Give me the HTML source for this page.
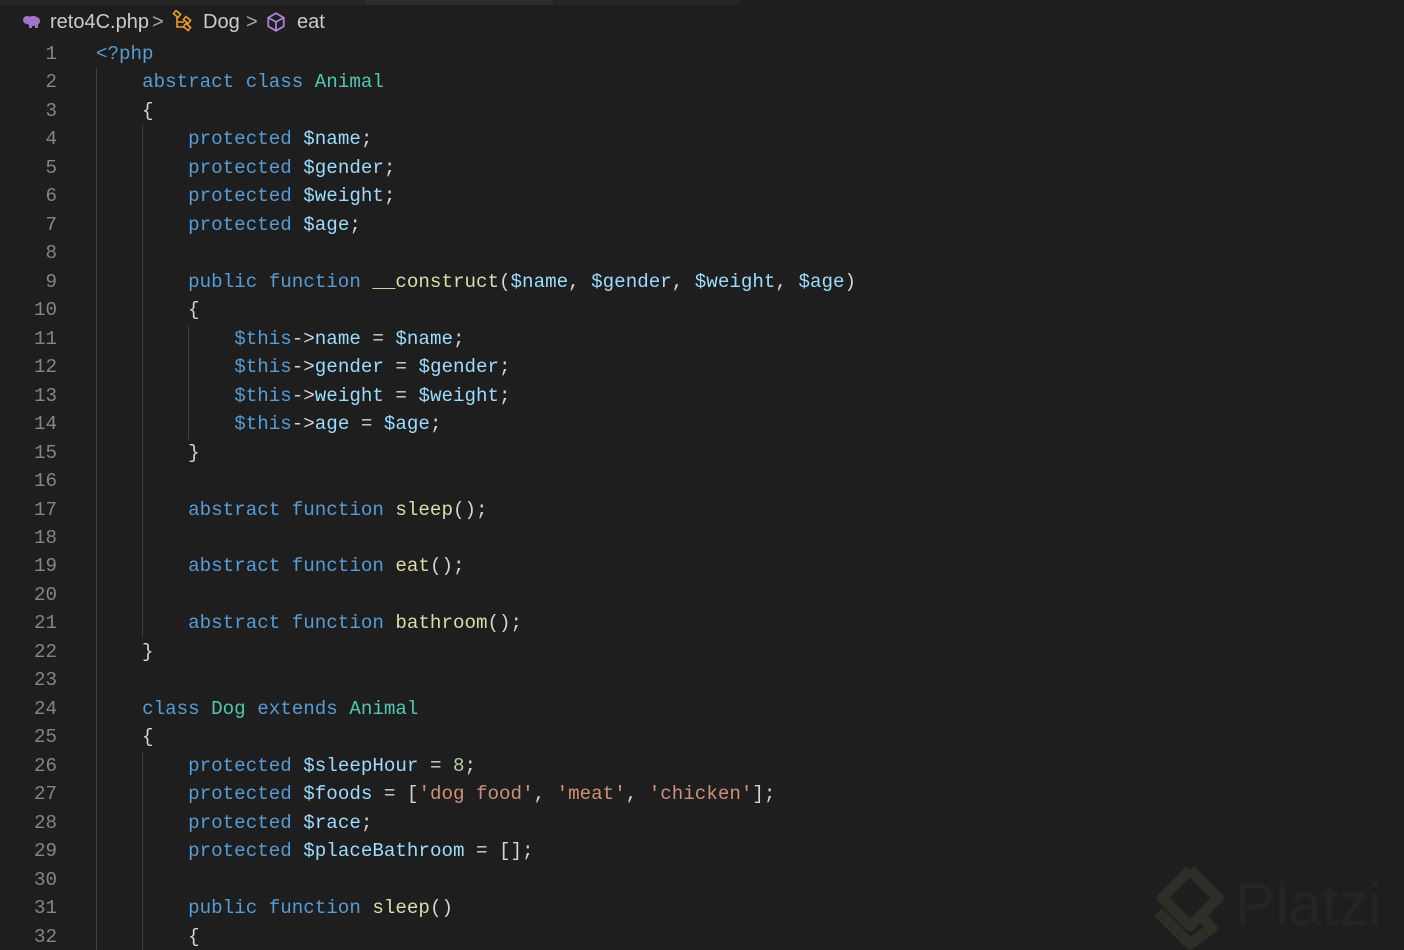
<!DOCTYPE html>
<html><head><meta charset="utf-8"><style>
html,body{margin:0;padding:0;background:#1e1e1e;width:1404px;height:950px;overflow:hidden;position:relative}
.top{position:absolute;left:0;top:0;width:1404px;height:5px;background:#252526}
.tab{position:absolute;top:0;height:5px;background:#2d2d2d}
.bc{position:absolute;top:10px;font-family:"Liberation Sans",sans-serif;font-size:20px;color:#cccccc;white-space:nowrap;line-height:24px}
.code{position:absolute;top:40px;left:0;font-family:"Liberation Mono",monospace;font-size:19.2px;}
.l{height:28.48px;line-height:28.48px;white-space:pre;position:relative}
.n{position:absolute;left:0;width:57px;text-align:right;color:#858585}
.t{position:absolute;left:96px;color:#d4d4d4}
.k{color:#569cd6}.v{color:#9cdcfe}.f{color:#dcdcaa}.c{color:#4ec9b0}.s{color:#ce9178}.d{color:#b5cea8}
.g{position:absolute;width:1px;background:#404040}
</style></head><body>
<div class="top"></div><div class="tab" style="left:365px;width:188px"></div><div class="tab" style="left:740px;width:664px;background:#1e1e1e"></div>
<svg style="position:absolute;left:22px;top:14px" width="20" height="16" viewBox="0 0 20 16"><ellipse cx="11" cy="7" rx="7" ry="5" fill="#a074c4"/><circle cx="5" cy="6" r="4" fill="#a074c4"/><rect x="7" y="9" width="3" height="5" fill="#a074c4"/><rect x="13" y="9" width="3" height="5" fill="#a074c4"/></svg>
<div class="bc" style="left:50px">reto4C.php</div>
<div class="bc" style="left:152px;color:#aaa">&gt;</div>
<svg style="position:absolute;left:171px;top:10px" width="22" height="22" viewBox="0 0 22 22" fill="none" stroke="#ee9d28" stroke-width="1.6"><rect x="3" y="2" width="6" height="4" transform="rotate(40 6 4)"/><rect x="13" y="8" width="6" height="4" transform="rotate(40 16 10)"/><rect x="13" y="15" width="6" height="4" transform="rotate(40 16 17)"/><path d="M6 7v10h7M6 12h7"/></svg>
<div class="bc" style="left:203px">Dog</div>
<div class="bc" style="left:246px;color:#aaa">&gt;</div>
<svg style="position:absolute;left:265px;top:11px" width="22" height="22" viewBox="0 0 20 20" fill="none" stroke="#b180d7" stroke-width="1.6"><path d="M10 2l7 4v8l-7 4-7-4V6z M3 6l7 4 7-4 M10 10v8"/></svg>
<div class="bc" style="left:297px">eat</div>
<div class="g" style="left:96px;top:68px;height:884px"></div>
<div class="g" style="left:142px;top:125px;height:512px"></div>
<div class="g" style="left:142px;top:752px;height:200px"></div>
<div class="g" style="left:188px;top:325px;height:114px"></div>
<svg style="position:absolute;left:1150px;top:860px" width="250" height="90" viewBox="0 0 250 90"><path d="M40 10 L68 38 L50 56 M40 10 L12 38 L40 66 L50 56 L62 68 L40 84 L8 52" fill="none" stroke="#2c2f26" stroke-width="11" stroke-linejoin="round"/><text x="85" y="65" font-family="Liberation Sans,sans-serif" font-size="60" fill="#242424">Platzi</text></svg>
<div class="code">
<div class="l"><span class="n">1</span><span class="t"><span class="k">&lt;?php</span></span></div>
<div class="l"><span class="n">2</span><span class="t">    <span class="k">abstract class</span> <span class="c">Animal</span></span></div>
<div class="l"><span class="n">3</span><span class="t">    {</span></div>
<div class="l"><span class="n">4</span><span class="t">        <span class="k">protected</span> <span class="v">$name</span>;</span></div>
<div class="l"><span class="n">5</span><span class="t">        <span class="k">protected</span> <span class="v">$gender</span>;</span></div>
<div class="l"><span class="n">6</span><span class="t">        <span class="k">protected</span> <span class="v">$weight</span>;</span></div>
<div class="l"><span class="n">7</span><span class="t">        <span class="k">protected</span> <span class="v">$age</span>;</span></div>
<div class="l"><span class="n">8</span><span class="t"></span></div>
<div class="l"><span class="n">9</span><span class="t">        <span class="k">public function</span> <span class="f">__construct</span>(<span class="v">$name</span>, <span class="v">$gender</span>, <span class="v">$weight</span>, <span class="v">$age</span>)</span></div>
<div class="l"><span class="n">10</span><span class="t">        {</span></div>
<div class="l"><span class="n">11</span><span class="t">            <span class="k">$this</span>-&gt;<span class="v">name</span> = <span class="v">$name</span>;</span></div>
<div class="l"><span class="n">12</span><span class="t">            <span class="k">$this</span>-&gt;<span class="v">gender</span> = <span class="v">$gender</span>;</span></div>
<div class="l"><span class="n">13</span><span class="t">            <span class="k">$this</span>-&gt;<span class="v">weight</span> = <span class="v">$weight</span>;</span></div>
<div class="l"><span class="n">14</span><span class="t">            <span class="k">$this</span>-&gt;<span class="v">age</span> = <span class="v">$age</span>;</span></div>
<div class="l"><span class="n">15</span><span class="t">        }</span></div>
<div class="l"><span class="n">16</span><span class="t"></span></div>
<div class="l"><span class="n">17</span><span class="t">        <span class="k">abstract function</span> <span class="f">sleep</span>();</span></div>
<div class="l"><span class="n">18</span><span class="t"></span></div>
<div class="l"><span class="n">19</span><span class="t">        <span class="k">abstract function</span> <span class="f">eat</span>();</span></div>
<div class="l"><span class="n">20</span><span class="t"></span></div>
<div class="l"><span class="n">21</span><span class="t">        <span class="k">abstract function</span> <span class="f">bathroom</span>();</span></div>
<div class="l"><span class="n">22</span><span class="t">    }</span></div>
<div class="l"><span class="n">23</span><span class="t"></span></div>
<div class="l"><span class="n">24</span><span class="t">    <span class="k">class</span> <span class="c">Dog</span> <span class="k">extends</span> <span class="c">Animal</span></span></div>
<div class="l"><span class="n">25</span><span class="t">    {</span></div>
<div class="l"><span class="n">26</span><span class="t">        <span class="k">protected</span> <span class="v">$sleepHour</span> = <span class="d">8</span>;</span></div>
<div class="l"><span class="n">27</span><span class="t">        <span class="k">protected</span> <span class="v">$foods</span> = [<span class="s">'dog food'</span>, <span class="s">'meat'</span>, <span class="s">'chicken'</span>];</span></div>
<div class="l"><span class="n">28</span><span class="t">        <span class="k">protected</span> <span class="v">$race</span>;</span></div>
<div class="l"><span class="n">29</span><span class="t">        <span class="k">protected</span> <span class="v">$placeBathroom</span> = [];</span></div>
<div class="l"><span class="n">30</span><span class="t"></span></div>
<div class="l"><span class="n">31</span><span class="t">        <span class="k">public function</span> <span class="f">sleep</span>()</span></div>
<div class="l"><span class="n">32</span><span class="t">        {</span></div>
</div>
</body></html>
